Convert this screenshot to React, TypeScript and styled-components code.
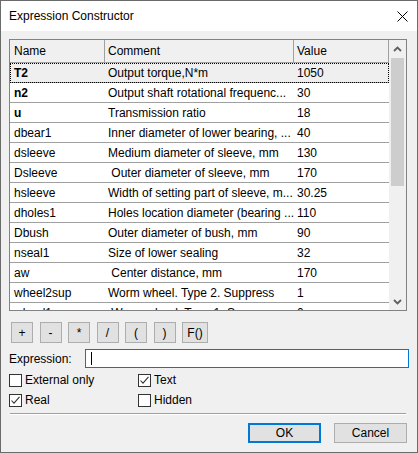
import styled, { createGlobalStyle } from "styled-components";

const GlobalStyle = createGlobalStyle`
    html, body {
        margin: 0;
        padding: 0;
        background: #ffffff;
    }
    * {
        box-sizing: border-box;
    }
`;

const Window = styled.div`
    width: 418px;
    height: 453px;
    border: 1px solid #6b6b6b;
    background: #f0f0f0;
    display: flex;
    flex-direction: column;
    font-family: "Liberation Sans", Arial, sans-serif;
    font-size: 12px;
    color: #000;
`;

const TitleBar = styled.div`
    height: 30px;
    flex-shrink: 0;
    background: #ffffff;
    display: flex;
    align-items: center;
    justify-content: space-between;
    padding: 0 9px 0 8px;
    font-size: 12px;
`;

const Body = styled.div`
    flex: 1;
    display: flex;
    flex-direction: column;
    padding: 8px 8px 0 8px;
`;

const ListBox = styled.div`
    height: 272px;
    margin-right: 2px;
    border: 1px solid #828282;
    background: #ffffff;
    display: flex;
    overflow: hidden;
`;

const Table = styled.div`
    width: 379px;
    overflow: hidden;
`;

const Grid = styled.div`
    display: grid;
    grid-template-columns: 95px 189px 95px;
`;

const HeaderRow = styled(Grid)`
    height: 23px;
    background: #f0f0f0;
    border-bottom: 1px solid #a0a0a0;
`;

const HeaderCell = styled.div<{ $first?: boolean }>`
    display: flex;
    align-items: center;
    padding-left: ${(p) => (p.$first ? "4px" : "3px")};
    border-right: 1px solid #a0a0a0;
    white-space: nowrap;
`;

const Row = styled(Grid)<{ $selected?: boolean }>`
    height: 20px;
    border-bottom: 1px solid #a0a0a0;
    background: ${(p) => (p.$selected ? "#efefef" : "#ffffff")};
    outline: ${(p) => (p.$selected ? "1px dotted #000" : "none")};
    outline-offset: -1px;
`;

const Cell = styled.div<{ $bold?: boolean; $first?: boolean }>`
    display: flex;
    align-items: center;
    padding-left: ${(p) => (p.$first ? "4px" : "3px")};
    font-weight: ${(p) => (p.$bold ? "bold" : "normal")};
    white-space: pre;
    overflow: hidden;
    text-overflow: ellipsis;
`;

const ScrollBar = styled.div`
    width: 17px;
    background: #f0f0f0;
    display: flex;
    flex-direction: column;
`;

const ScrollArrow = styled.div`
    height: 17px;
    display: flex;
    align-items: center;
    justify-content: center;
    flex-shrink: 0;
`;

const Thumb = styled.div`
    width: 13px;
    height: 128px;
    margin-left: 2px;
    margin-top: 1px;
    background: #cdcdcd;
`;

const Track = styled.div`
    flex: 1;
`;

const OpRow = styled.div`
    display: flex;
    gap: 6.5px;
    margin: 11px 0 0 2px;
`;

const OpButton = styled.button<{ $wide?: boolean }>`
    width: ${(p) => (p.$wide ? "26px" : "22px")};
    height: 21px;
    padding: 0;
    background: #e1e1e1;
    border: 1px solid #adadad;
    font-family: inherit;
    font-size: 12px;
    color: #000;
`;

const ExprRow = styled.div`
    display: flex;
    align-items: center;
    margin-top: 6px;
`;

const ExprLabel = styled.div`
    width: 76px;
`;

const ExprInput = styled.div`
    flex: 1;
    height: 19px;
    border: 1px solid #0078d7;
    background: #ffffff;
    display: flex;
    align-items: center;
    padding-left: 5px;
`;

const Caret = styled.span`
    width: 1px;
    height: 13px;
    background: #000;
`;

const Checks = styled.div`
    display: grid;
    grid-template-columns: 129px auto;
    grid-auto-rows: 20px;
    margin-top: 6px;
`;

const CheckItem = styled.label`
    display: flex;
    align-items: flex-start;
    gap: 3px;
    line-height: 13px;
`;

const Box = styled.span`
    width: 13px;
    height: 13px;
    border: 1px solid #333333;
    background: #ffffff;
    display: flex;
    align-items: center;
    justify-content: center;
    flex-shrink: 0;
`;

const Separator = styled.div`
    height: 2px;
    margin: -1px 3px 0 1px;
    border-top: 1px solid #a0a0a0;
    border-bottom: 1px solid #ffffff;
`;

const Footer = styled.div`
    display: flex;
    justify-content: flex-end;
    gap: 13px;
    margin: 8px 2px 0 0;
`;

const DialogButton = styled.button<{ $default?: boolean }>`
    width: 73px;
    height: 20px;
    padding: 0;
    background: #e1e1e1;
    border: ${(p) => (p.$default ? "2px solid #0078d7" : "1px solid #adadad")};
    font-family: inherit;
    font-size: 12px;
    color: #000;
`;

const rows = [
    { name: "T2", comment: "Output torque,N*m", value: "1050", bold: true },
    { name: "n2", comment: "Output shaft rotational frequenc...", value: "30", bold: true },
    { name: "u", comment: "Transmission ratio", value: "18", bold: true },
    { name: "dbear1", comment: "Inner diameter of lower bearing, ...", value: "40" },
    { name: "dsleeve", comment: "Medium diameter of sleeve, mm", value: "130" },
    { name: "Dsleeve", comment: " Outer diameter of sleeve, mm", value: "170" },
    { name: "hsleeve", comment: "Width of setting part of sleeve, m...", value: "30.25" },
    { name: "dholes1", comment: "Holes location diameter (bearing ...", value: "110" },
    { name: "Dbush", comment: "Outer diameter of bush, mm", value: "90" },
    { name: "nseal1", comment: "Size of lower sealing", value: "32" },
    { name: "aw", comment: " Center distance, mm", value: "170" },
    { name: "wheel2sup", comment: "Worm wheel. Type 2. Suppress", value: "1" },
    { name: "wheel1sup", comment: " Worm wheel. Type 1. Suppress", value: "0" },
];

const ops = ["+", "-", "*", "/", "(", ")"];

function Chevron({ up }: { up?: boolean }) {
    return (
        <svg width="9" height="6" viewBox="0 0 9 6">
            <path
                d={up ? "M1 5 L4.5 1.5 L8 5" : "M1 1 L4.5 4.5 L8 1"}
                fill="none"
                stroke="#606060"
                strokeWidth="1.8"
            />
        </svg>
    );
}

function CheckBox({ label, checked }: { label: string; checked?: boolean }) {
    return (
        <CheckItem>
            <Box>
                {checked && (
                    <svg width="11" height="11" viewBox="0 0 11 11">
                        <path d="M1.5 5.5 L4 8.2 L9.5 1.8" fill="none" stroke="#333" strokeWidth="1.1" />
                    </svg>
                )}
            </Box>
            {label}
        </CheckItem>
    );
}

function App() {
    return (
        <>
            <GlobalStyle />
            <Window>
                <TitleBar>
                    <span>Expression Constructor</span>
                    <svg width="11" height="11" viewBox="0 0 11 11">
                        <path d="M0.5 0.5 L10.5 10.5 M10.5 0.5 L0.5 10.5" stroke="#000" strokeWidth="1" />
                    </svg>
                </TitleBar>
                <Body>
                    <ListBox>
                        <Table>
                            <HeaderRow>
                                <HeaderCell $first>Name</HeaderCell>
                                <HeaderCell>Comment</HeaderCell>
                                <HeaderCell>Value</HeaderCell>
                            </HeaderRow>
                            {rows.map((r, i) => (
                                <Row key={r.name} $selected={i === 0}>
                                    <Cell $first $bold={r.bold}>{r.name}</Cell>
                                    <Cell>{r.comment}</Cell>
                                    <Cell>{r.value}</Cell>
                                </Row>
                            ))}
                        </Table>
                        <ScrollBar>
                            <ScrollArrow><Chevron up /></ScrollArrow>
                            <Thumb />
                            <Track />
                            <ScrollArrow><Chevron /></ScrollArrow>
                        </ScrollBar>
                    </ListBox>

                    <OpRow>
                        {ops.map((o) => (
                            <OpButton key={o}>{o}</OpButton>
                        ))}
                        <OpButton $wide>F()</OpButton>
                    </OpRow>

                    <ExprRow>
                        <ExprLabel>Expression:</ExprLabel>
                        <ExprInput><Caret /></ExprInput>
                    </ExprRow>

                    <Checks>
                        <CheckBox label="External only" />
                        <CheckBox label="Text" checked />
                        <CheckBox label="Real" checked />
                        <CheckBox label="Hidden" />
                    </Checks>

                    <Separator />

                    <Footer>
                        <DialogButton $default>OK</DialogButton>
                        <DialogButton>Cancel</DialogButton>
                    </Footer>
                </Body>
            </Window>
        </>
    );
}

export default App;
